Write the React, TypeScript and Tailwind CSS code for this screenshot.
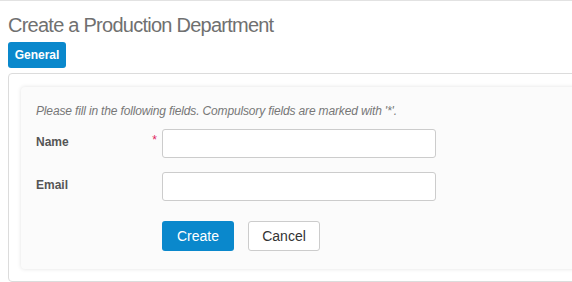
export default function App() {
  return (
    <div className="h-[282px] w-[572px] overflow-hidden border-t border-[#e2e2e2] bg-white font-['Liberation_Sans',Arial,sans-serif]">
      <h1 className="pl-2 pt-[12px] text-[20px] leading-[24px] tracking-[-0.75px] text-[#707070]">
        Create a Production Department
      </h1>
      <div className="pl-2 pt-[5px]">
        <button className="h-[26px] w-[58px] rounded-[3px] bg-[#0a88cc] text-[12px] font-bold text-white">
          General
        </button>
      </div>
      <div className="ml-2 mt-[5px] w-[620px] rounded-[4px] border border-[#dcdcdc] px-3 pt-[13px] pb-3">
        <div className="rounded-[4px] bg-[#fbfbfb] px-[15px] pt-[17px] pb-[18px] shadow-[0_0_4px_rgba(0,0,0,0.12)]">
          <p className="text-[12px] italic leading-[14px] tracking-[-0.15px] text-[#777]">
            Please fill in the following fields. Compulsory fields are marked with '*'.
          </p>
          <div className="mt-[11px] flex flex-col gap-[14px]">
            <div className="flex items-center">
              <label className="relative -top-[2px] w-[126px] text-[12px] font-bold text-[#555]">
                Name
                <span className="absolute right-[5px] -top-[2px] text-[12px] font-normal text-[#e0245e]">*</span>
              </label>
              <input className="h-[29px] w-[274px] rounded-[3px] border border-[#cccccc] bg-white" />
            </div>
            <div className="flex items-center">
              <label className="relative -top-[2px] w-[126px] text-[12px] font-bold text-[#555]">Email</label>
              <input className="h-[29px] w-[274px] rounded-[3px] border border-[#cccccc] bg-white" />
            </div>
          </div>
          <div className="mt-[20px] flex gap-[14px] pl-[126px]">
            <button className="h-[30px] w-[72px] rounded-[3px] bg-[#0a88cc] text-[14px] text-white">
              Create
            </button>
            <button className="h-[30px] w-[72px] rounded-[3px] border border-[#cccccc] bg-white text-[14px] text-[#333]">
              Cancel
            </button>
          </div>
        </div>
      </div>
    </div>
  );
}
